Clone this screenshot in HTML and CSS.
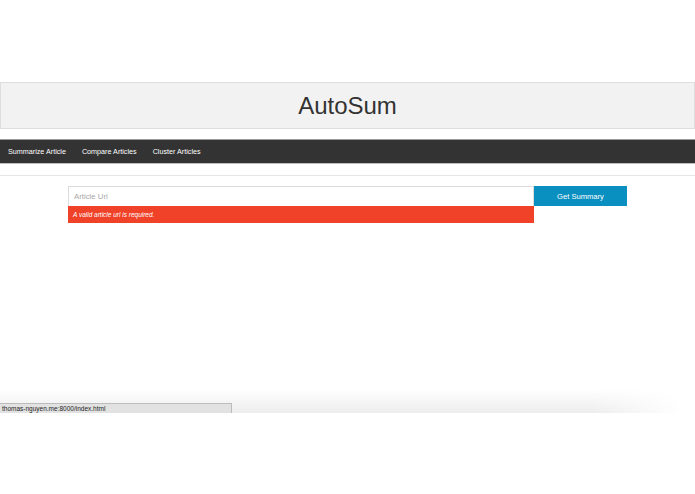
FILE: index.html
```html
<!DOCTYPE html>
<html lang="en">
<head>
<meta charset="utf-8">
<title>AutoSum</title>
<link rel="stylesheet" href="styles.css">
</head>
<body>
<div class="viewport">
  <header class="banner">
    <h1 class="title">AutoSum</h1>
  </header>
  <nav class="navbar">
    <a class="nav-link" href="#">Summarize Article</a>
    <a class="nav-link" href="#">Compare Articles</a>
    <a class="nav-link" href="#">Cluster Articles</a>
  </nav>
  <hr class="divider">
  <form class="summary-form">
    <div class="field">
      <input class="url-input" type="text" placeholder="Article Url">
      <div class="error">A valid article url is required.</div>
    </div>
    <button class="submit" type="button">Get Summary</button>
  </form>
  <div class="bottom-fade"></div>
  <div class="status-bubble">thomas-nguyen.me:8000/index.html</div>
</div>
</body>
</html>
```
FILE: styles.css
```css
* { box-sizing: border-box; }

html, body {
  margin: 0;
  padding: 0;
  background: #fff;
  font-family: "Liberation Sans", Arial, sans-serif;
  color: #333;
}

.viewport {
  position: relative;
  height: 413px;
  padding-top: 82px;
  overflow: hidden;
}

.banner {
  height: 47px;
  background: #f2f2f2;
  border: 1px solid #dedede;
  display: flex;
  align-items: center;
  justify-content: center;
}

.title {
  margin: 0;
  font-size: 24px;
  font-weight: normal;
  color: #333;
  line-height: 1;
  padding-top: 1px;
}

.navbar {
  margin-top: 10px;
  height: 25px;
  background: #333;
  border-top: 1px solid #9a9a9a;
  border-bottom: 1px solid #bdbdbd;
  display: flex;
  align-items: center;
}

.nav-link {
  color: #fff;
  text-decoration: none;
  font-size: 7.2px;
  padding: 0 8px;
}

.divider {
  margin: 11px 0 0;
  border: 0;
  border-top: 1px solid #e6e6e6;
  height: 0;
}

.summary-form {
  margin: 10px auto 0;
  width: 559px;
  display: flex;
  align-items: flex-start;
}

.field {
  width: 466px;
  display: flex;
  flex-direction: column;
}

.url-input {
  height: 20px;
  margin: 0;
  border: 1px solid #dcdcdc;
  border-bottom: 0;
  padding: 0 5px;
  font-family: inherit;
  font-size: 7.8px;
  color: #333;
  outline: none;
  background: #fff;
}

.url-input::placeholder { color: #a8a8a8; }

.error {
  height: 17px;
  background: #f04228;
  color: #fff;
  font-size: 6.5px;
  font-style: italic;
  padding-left: 5px;
  display: flex;
  align-items: center;
}

.submit {
  width: 93px;
  height: 20px;
  margin: 0;
  border: 0;
  background: #0a8fc1;
  color: #fff;
  font-family: inherit;
  font-size: 7.6px;
  cursor: pointer;
}

/* shade at the bottom edge of the window */
.bottom-fade {
  position: absolute;
  left: 0;
  right: 0;
  bottom: 0;
  height: 24px;
  background: linear-gradient(to bottom, rgba(235,235,235,0), rgba(235,235,235,0.9));
  -webkit-mask-image: linear-gradient(to right, #000 85%, transparent 98%);
  mask-image: linear-gradient(to right, #000 85%, transparent 98%);
}

.status-bubble {
  position: absolute;
  left: 0;
  bottom: 0;
  width: 232px;
  height: 10px;
  background: #e2e2e2;
  border: 1px solid #bcbcbc;
  border-bottom: 0;
  border-left: 0;
  font-size: 6.5px;
  color: #222;
  padding-left: 2px;
  line-height: 9px;
}
```
